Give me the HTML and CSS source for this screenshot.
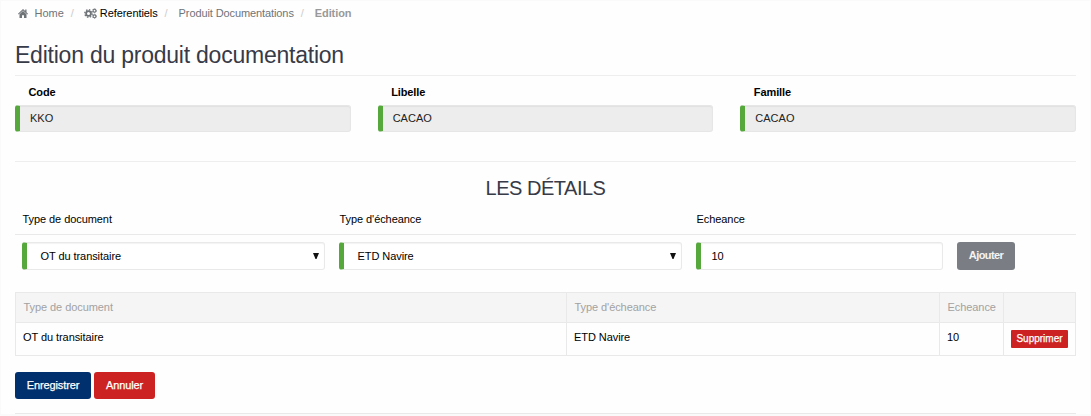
FILE: index.html
```html
<!DOCTYPE html>
<html lang="fr">
<head>
<meta charset="utf-8">
<title>Edition du produit documentation</title>
<link rel="stylesheet" href="styles.css">
</head>
<body>
<main class="page">
  <nav class="breadcrumb">
    <svg class="icon-home" viewBox="0 0 10 9"><path d="M5 0 0 4.700l.7.7L5 1.500l4.300 3.900.7-.7-1.500-1.400V.6H7.200v1.500zM5 2 1.500 5.200V9H4V6.200h2V9h2.500V5.200z"/></svg>
    <a class="crumb-home">Home</a><span class="sep">/</span>
    <svg class="icon-cogs" viewBox="0 0 13 11"><circle cx="4.500" cy="5.500" r="2.400" fill="none" stroke="#6f7479" stroke-width="1.800"/><circle cx="4.500" cy="5.500" r="3.700" fill="none" stroke="#6f7479" stroke-width="1.400" stroke-dasharray="1.450 1.450"/><circle cx="10.500" cy="2.700" r="1.400" fill="none" stroke="#6f7479" stroke-width="1.100"/><circle cx="10.500" cy="2.700" r="2.100" fill="none" stroke="#6f7479" stroke-width=".7" stroke-dasharray="1.100 1.100"/><circle cx="10.500" cy="8.300" r="1.400" fill="none" stroke="#6f7479" stroke-width="1.100"/><circle cx="10.500" cy="8.300" r="2.100" fill="none" stroke="#6f7479" stroke-width=".7" stroke-dasharray="1.100 1.100"/></svg>
    <span class="crumb-ref">Referentiels</span><span class="sep">/</span>
    <a class="crumb-doc">Produit Documentations</a><span class="sep">/</span>
    <b class="crumb-current">Edition</b>
  </nav>
  <h1 class="title">Edition du produit documentation</h1>
  <section class="fields">
    <div class="field"><label class="label">Code</label><div class="control readonly">KKO</div></div>
    <div class="field"><label class="label">Libelle</label><div class="control readonly">CACAO</div></div>
    <div class="field"><label class="label">Famille</label><div class="control readonly">CACAO</div></div>
  </section>
  <h2 class="subtitle">LES DÉTAILS</h2>
  <div class="entry entry-head"><span>Type de document</span><span>Type d'écheance</span><span>Echeance</span></div>
  <div class="entry entry-row">
    <div class="control select">OT du transitaire<svg class="arrow" viewBox="0 0 6 6"><path d="M0 0h6L3.500 6h-1z"/></svg></div>
    <div class="control select">ETD Navire<svg class="arrow" viewBox="0 0 6 6"><path d="M0 0h6L3.500 6h-1z"/></svg></div>
    <div class="control number">10</div>
    <button class="btn btn-add">Ajouter</button>
  </div>
  <table class="grid">
    <colgroup><col class="c1"><col class="c2"><col class="c3"><col class="c4"></colgroup>
    <tr class="grid-head"><th>Type de document</th><th>Type d'écheance</th><th>Echeance</th><th></th></tr>
    <tr class="grid-row"><td>OT du transitaire</td><td>ETD Navire</td><td>10</td><td><button class="btn btn-small">Supprimer</button></td></tr>
  </table>
  <div class="actions"><button class="btn btn-save">Enregistrer</button><button class="btn btn-cancel">Annuler</button></div>
</main>
</body>
</html>
```
FILE: styles.css
```css
* { box-sizing: border-box; }
body { margin: 0; background: #fefefe; color: #000; font: 11px/16px "Liberation Sans", Arial, sans-serif; }
.page { height: 416px; padding: 0 14px; border: solid #fafafa; border-width: 1px 1px 2px; }
.breadcrumb { display: flex; align-items: center; height: 24px; padding-left: 3px; color: #6f7479; }
.icon-home { width: 10px; height: 9px; margin-right: 6.500px; fill: #6f7479; }
.icon-cogs { width: 13px; height: 11px; margin: 0 3px 0 1px; }
.sep { width: 19px; padding-left: 7px; color: #ccc; }
.crumb-ref { color: #000; letter-spacing: -.08px; }
.crumb-doc { margin-left: 2px; letter-spacing: -.1px; }
.crumb-current { margin-left: 2px; color: #999; letter-spacing: -.1px; }
.title { height: 51px; margin: 0; padding-top: 14px; border-bottom: 1px solid #eee; color: #373a47; font-size: 23px; line-height: 32px; font-weight: 400; letter-spacing: -.23px; white-space: nowrap; }
.fields { display: grid; grid-template-columns: repeat(3, 1fr); gap: 27px; height: 86px; padding-top: 8px; border-bottom: 1px solid #eee; }
.label { display: block; height: 21px; padding-left: 13.500px; font-weight: 700; letter-spacing: -.1px; }
.control { display: flex; align-items: center; height: 28px; border: 1px solid #e9e9e9; border-left: 5px solid #56a83c; border-radius: 3px; box-shadow: inset 0 1px 1px rgba(0,0,0,.05); background: #fff; }
.readonly { height: 27px; padding: 0 0 1px 10px; background: #ededed; border-color: #e6e6e6; border-left-color: #56a83c; color: #222; }
.subtitle { height: 42px; margin: 0; padding-top: 14px; color: #373a47; text-align: center; font-size: 20px; line-height: 24px; font-weight: 400; letter-spacing: -.48px; }
.entry { display: grid; grid-template-columns: 303px 343px 247px 58px; gap: 14px; padding-left: 7px; }
.entry-head { height: 31px; padding-top: 7px; border-bottom: 1px solid #e9e9e9; letter-spacing: -.07px; }
.entry-head span { padding-left: .5px; }
.entry-row { height: 57px; padding-top: 7px; align-items: start; }
.select { padding: 0 5px 0 13.500px; justify-content: space-between; letter-spacing: -.07px; }
.arrow { width: 6px; height: 6px; fill: #111; }
.number { padding-left: 10.500px; }
.btn { height: 27px; margin: 0; padding: 0; border: 0; border-radius: 3px; color: #fff; font: 11px/16px "Liberation Sans", Arial, sans-serif; -webkit-text-stroke: .25px #fff; }
.btn-add { height: 28px; padding-bottom: 2px; background: #7a7e84; color: #f4f4f4; font-weight: 700; letter-spacing: -.6px; -webkit-text-stroke: 0; }
.grid { width: 1060px; border-collapse: collapse; table-layout: fixed; }
.c1 { width: 551px; } .c2 { width: 373px; } .c3 { width: 64px; } .c4 { width: 72px; }
.grid th, .grid td { padding: 0 7px; border: 1px solid #e9e9e9; text-align: left; font-weight: 400; letter-spacing: -.07px; }
.grid th { padding-bottom: 1px; padding-left: 7.500px; background: #f5f5f5; color: #a2a2a2; }
.grid-head { height: 30px; }
.grid-row { height: 33px; }
.grid td { vertical-align: top; padding-top: 6px; }
.btn-small { display: block; width: 57px; height: 18px; margin-top: 1px; border-radius: 1px; background: #c22; font-size: 10px; }
.actions { display: flex; gap: 3px; height: 58px; padding-top: 16px; border-bottom: 1px solid #e9e9e9; }
.actions .btn { padding-bottom: 1px; }
.btn-save { width: 76px; background: #00306d; letter-spacing: -.1px; }
.btn-cancel { width: 61px; background: #c22; letter-spacing: -.1px; }
```
